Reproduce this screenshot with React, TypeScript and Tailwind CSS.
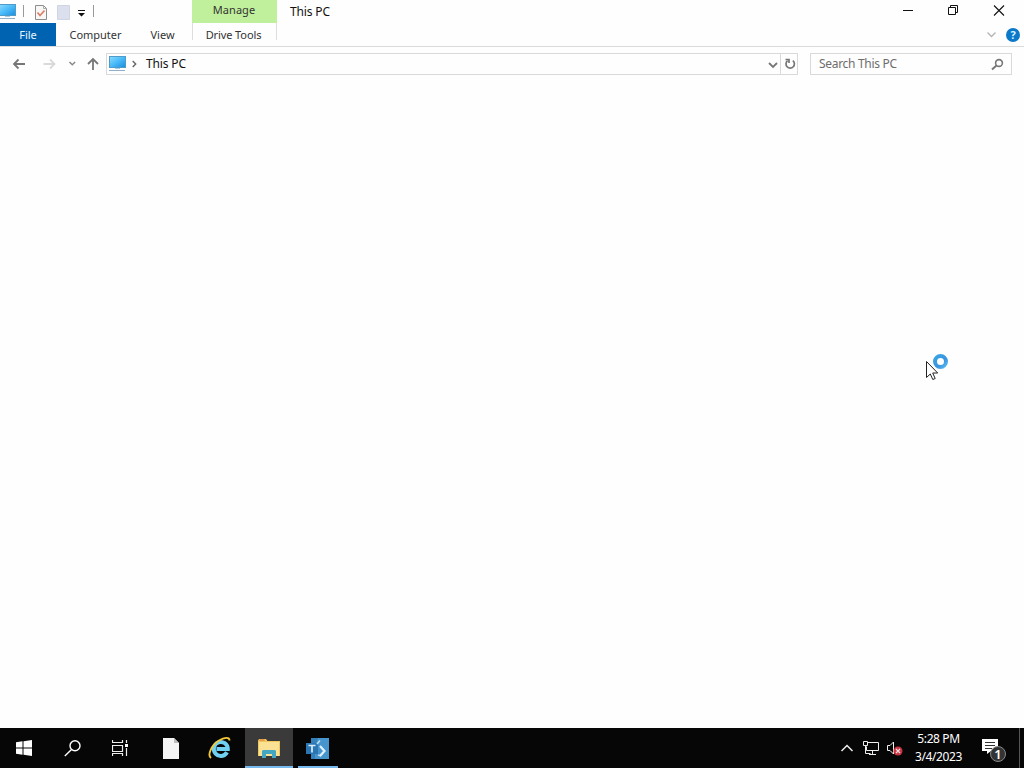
import type { ReactNode } from "react"
import { clsx } from "clsx"

function MonitorIcon({ className }: { className?: string }) {
  return (
    <svg width="17" height="16" viewBox="0 0 17 16" className={className}>
      <defs>
        <linearGradient id="screen" x1="0" y1="0" x2="1" y2="1">
          <stop offset="0" stopColor="#8ddcff" />
          <stop offset="0.5" stopColor="#48b9f8" />
          <stop offset="1" stopColor="#1b8de0" />
        </linearGradient>
      </defs>
      <rect x="0.5" y="0.5" width="16" height="11" fill="url(#screen)" stroke="#4f9cc9" />
      <path d="M6 12h5v1H6z" fill="#a9c8dc" />
      <path d="M0 14.5h16" stroke="#8fb0c8" />
    </svg>
  )
}

function QuickAccess() {
  return (
    <div className="flex h-[23px] items-start">
      <MonitorIcon className="mt-1 -ml-px shrink-0" />
      <span className="ml-[7px] mt-[5px] h-3 w-px bg-[#999]" />
      <svg width="12" height="15" viewBox="0 0 12 15" className="ml-[11px] mt-[5px]">
        <path d="M0.5 0.5h8l3 3v11H0.5z" fill="#f9f7f5" stroke="#8d8d8d" />
        <path d="M8.5 0.5v3h3" fill="none" stroke="#aaa" />
        <path d="M2.5 7.5l2.5 3 4.5-5" fill="none" stroke="#d9806a" strokeWidth="1.8" />
      </svg>
      <svg width="13" height="15" viewBox="0 0 13 15" className="ml-[10px] mt-[5px]">
        <path d="M0.5 0.5h12v14H0.5z" fill="#dce0ee" stroke="#d0d5e4" />
      </svg>
      <svg width="7" height="7" viewBox="0 0 7 7" className="ml-2 mt-[10px]">
        <path d="M0 0h7v1H0zM0 3h7L3.5 6.5z" fill="#111" />
      </svg>
      <span className="ml-2 mt-[5px] h-3 w-px bg-[#999]" />
    </div>
  )
}

function WindowControls() {
  return (
    <svg width="124" height="23" viewBox="0 0 124 23" fill="none" stroke="#111" className="shrink-0">
      <path d="M3 10.5h10" />
      <path d="M48.5 7.5h7v7h-7zM50.5 7.5v-2h7v7h-2" />
      <path d="M94 5.5l10 10M104 5.5l-10 10" strokeWidth="1.1" />
    </svg>
  )
}

function Header() {
  return (
    <header className="flex h-[47px] border-b border-[#dadbdc] text-[11px] leading-[14px] text-[#333]">
      <div className="w-48">
        <QuickAccess />
        <div className="flex h-[23px] items-center">
          <div className="flex h-full w-14 items-center justify-center bg-[#0063b1] text-[#e8f4ff]">File</div>
          <div className="flex w-[79px] justify-center tracking-[-0.05px]">Computer</div>
          <div className="flex w-[55px] justify-center">View</div>
        </div>
      </div>
      <div className="w-[85px] text-center">
        <div className="h-[23px] bg-[#c1f09c] pt-[3px] pr-px tracking-[0.05px]">Manage</div>
        <div className="h-[17px] border-x border-[#dedede] pt-[5px] pr-[2px] whitespace-nowrap tracking-[-0.1px]">Drive Tools</div>
      </div>
      <div className="flex-1">
        <div className="flex h-[23px] justify-between">
          <span className="ml-[13px] mt-1 text-xs leading-4 tracking-[-0.15px] text-[#111]">This PC</span>
          <WindowControls />
        </div>
        <div className="flex h-[23px] items-center justify-end">
          <svg width="9" height="6" viewBox="0 0 9 6" fill="none" stroke="#b4b4b4" strokeWidth="1.3" className="mr-[10px]">
            <path d="M0.5 0.5l4 4 4-4" />
          </svg>
          <div className="mr-1 flex h-[14px] w-[14px] items-center justify-center rounded-full bg-[#0b78c8] text-[11px] font-bold text-[#d8f2ff]">
            ?
          </div>
        </div>
      </div>
    </header>
  )
}

function AddressRow() {
  return (
    <div className="flex h-[34px] items-start pt-[6px] text-xs">
      <svg width="106" height="22" viewBox="0 0 106 22" fill="none" stroke="#777" strokeWidth="1.8" className="shrink-0">
        <path d="M25 11H14M18.5 6.5L14 11l4.5 4.5" />
        <path d="M43.5 11h11M50 6.5l4.5 4.5-4.5 4.5" stroke="#d9d9d9" />
        <path d="M69.5 9l2.8 2.8 2.8-2.8" stroke="#888" strokeWidth="1.5" />
        <path d="M93 17V6M88 11l5-5 5 5" />
      </svg>
      <div className="flex h-[22px] w-[692px] border border-[#d9d9d9]">
        <MonitorIcon className="ml-[2px] mt-[2px]" />
        <svg width="5" height="8" viewBox="0 0 5 8" fill="none" stroke="#666" strokeWidth="1.4" className="ml-[6px] mt-[6px]">
          <path d="M0.7 1l3 3-3 3" />
        </svg>
        <span className="ml-[9px] flex-1 leading-[20px] tracking-[-0.15px] text-[#111]">This PC</span>
        <svg width="10" height="7" viewBox="0 0 10 7" fill="none" stroke="#777" strokeWidth="1.8" className="mr-[2px] mt-2">
          <path d="M1 1l4 4 4-4" />
        </svg>
        <div className="flex w-[17px] items-center justify-center border-l border-[#d9d9d9]">
          <svg width="12" height="12" viewBox="0 0 12 12" fill="none" stroke="#777" strokeWidth="1.7" className="ml-px">
            <path d="M8.8 2.6a4.2 4.2 0 1 1-5.2 0" />
            <path d="M1.5 1.5H5V5" />
          </svg>
        </div>
      </div>
      <div className="ml-3 flex h-[22px] w-[202px] items-center justify-between border border-[#d9d9d9] pl-2 pr-[7px] tracking-[-0.3px] text-[#6d6d6d]">
        Search This PC
        <svg width="13" height="13" viewBox="0 0 13 13" fill="none" stroke="#777">
          <circle cx="8" cy="5" r="3.4" strokeWidth="1.6" />
          <path d="M5.5 7.5L1 11.5" strokeWidth="2" />
        </svg>
      </div>
    </div>
  )
}

function BusyCursor() {
  return (
    <svg width="24" height="30" viewBox="0 0 24 30" className="absolute left-[925px] top-[352px]">
      <defs>
        <linearGradient id="ring" x1="0" y1="0" x2="1" y2="1">
          <stop offset="0" stopColor="#37a5e4" />
          <stop offset="0.6" stopColor="#3a93df" />
          <stop offset="1" stopColor="#55b9ef" />
        </linearGradient>
      </defs>
      <circle cx="15.5" cy="9.5" r="5.5" fill="#fff" stroke="url(#ring)" strokeWidth="4" />
      <path d="M1.5 9.5v16l3.8-3.5 2.5 5.5 2.4-1-2.5-5.5h5z" fill="#fff" stroke="#222" />
    </svg>
  )
}

function TaskButton({ children, width, open, active }: { children: ReactNode; width: string; open?: boolean; active?: boolean }) {
  return (
    <div
      className={clsx(
        "flex h-10 items-center justify-center border-b-2",
        width,
        active && "bg-[#3a3a3a]",
        open ? "border-[#76b9ed]" : "border-transparent"
      )}
    >
      {children}
    </div>
  )
}

function Taskbar() {
  return (
    <footer className="flex h-10 items-center bg-[#060606] text-white">
      <TaskButton width="w-12">
        <svg width="16" height="16" viewBox="0 0 16 16" fill="#fff" className="mt-[2px]">
          <path d="M0 2.2L6.5 1.3v6.2H0zM7.5 1.15L16 0v7.5H7.5zM0 8.5h6.5v6.2L0 13.8zM7.5 8.5H16V16l-8.5-1.15z" />
        </svg>
      </TaskButton>
      <TaskButton width="w-12">
        <svg width="17" height="17" viewBox="0 0 17 17" fill="none" stroke="#fff" strokeWidth="1.4" className="mt-[2px]">
          <circle cx="11" cy="5.8" r="5" />
          <path d="M7.5 9.5L0.8 16" />
        </svg>
      </TaskButton>
      <TaskButton width="w-12">
        <svg width="16" height="16" viewBox="0 0 16 16" fill="none" stroke="#eee" className="mt-px">
          <path d="M0.5 0v2.5h10V0M0.5 5.5h10v6H0.5zM0.5 16v-2.5h10V16M14.5 0v3M14.5 8v8" strokeWidth="1.2" />
          <path d="M13 4h3v3h-3z" fill="#fff" stroke="none" />
        </svg>
      </TaskButton>
      <TaskButton width="w-[53px]">
        <svg width="16" height="21" viewBox="0 0 16 21" className="mt-[2px]">
          <path d="M0 0h11l5 5v16H0z" fill="#f4f4f4" />
          <path d="M11 0v5h5z" fill="#bdbdbd" />
        </svg>
      </TaskButton>
      <TaskButton width="w-12">
        <svg width="24" height="24" viewBox="0 0 24 24" fill="none" className="mt-[2px] ml-[-3px]">
          <path d="M19 16.2A7 7 0 1 1 19.8 13H8.5" stroke="#6fd0f2" strokeWidth="4" />
          <path d="M3 22C-1 19 3.5 9 11 4.5C16 1.5 21.5 0.5 21.5 4.5" stroke="#f3c73a" strokeWidth="1.9" />
        </svg>
      </TaskButton>
      <TaskButton width="w-12" open active>
        <svg width="22" height="19" viewBox="0 0 22 19" className="mt-[3px]">
          <path d="M0 1.5L1 0h7l1.5 2H22v15H0z" fill="#efc75b" />
          <path d="M1 3h20v14H1z" fill="#fbe193" />
          <path d="M4 19v-7l1-1h12l1 1v7h-4v-4H8v4z" fill="#43a7c4" />
          <path d="M1.5 1h5" stroke="#df713c" />
        </svg>
      </TaskButton>
      <TaskButton width="ml-[5px] w-10" open>
        <svg width="23" height="21" viewBox="0 0 23 21" className="mt-[2px] mr-px">
          <path d="M5 0h18v21H5z" fill="#3480bb" />
          <path d="M12 0h11v21H9V9z" fill="#4795cd" />
          <path d="M0 5h12v11H0z" fill="#2b75b3" />
          <path d="M11 6l3-3.5M12 17l3 1" stroke="#b9def5" strokeWidth="1.6" />
          <path d="M14 8l4.5 5-4.5 5" fill="none" stroke="#e0f3ff" strokeWidth="2.2" />
          <path d="M2.5 7.5h7M6 7.5v7" stroke="#d8edfa" strokeWidth="1.7" />
        </svg>
      </TaskButton>
      <div className="ml-auto flex items-center">
        <svg width="64" height="18" viewBox="0 0 64 18" fill="none" stroke="#eee">
          <path d="M2.5 12L8 6.5l5.5 5.5" strokeWidth="1.5" />
          <path d="M28.5 3.5h11v8h-12v-4M24.5 2.5h4v4h-4zM26.5 7v7.5h5M33.5 12v3M30 15.5h7" />
          <path d="M48.5 6.5H51L54.5 3v12L51 11.5h-2.5z" />
          <circle cx="59" cy="12" r="4.5" fill="#c93540" stroke="none" />
          <path d="M57 10l4 4M61 10l-4 4" stroke="#ffdce0" strokeWidth="1.2" />
        </svg>
        <div className="w-[71px] text-center text-xs leading-[18px] tracking-[-0.4px]">
          <div>5:28 PM</div>
          <div>3/4/2023</div>
        </div>
        <svg width="26" height="26" viewBox="0 0 26 26" className="ml-[8px] mt-[6px]">
          <path d="M0 1h16v12H9l-4 3v-3H0z" fill="#fff" />
          <path d="M3 4.5h10M3 7.5h10M3 10.5h7" stroke="#333" />
          <circle cx="16" cy="16" r="7.5" fill="#333" stroke="#8a8a8a" />
          <text x="16" y="20.5" fill="#fff" fontSize="13" fontWeight="600" textAnchor="middle">1</text>
        </svg>
        <div className="ml-[11px] mr-1 h-10 w-px bg-[#555]" />
      </div>
    </footer>
  )
}

export default function App() {
  return (
    <div className="relative flex h-[768px] w-[1024px] flex-col overflow-hidden bg-[#fefefe] font-['Noto_Sans','Open_Sans',sans-serif]">
      <Header />
      <AddressRow />
      <main className="flex-1" />
      <Taskbar />
      <BusyCursor />
    </div>
  )
}
